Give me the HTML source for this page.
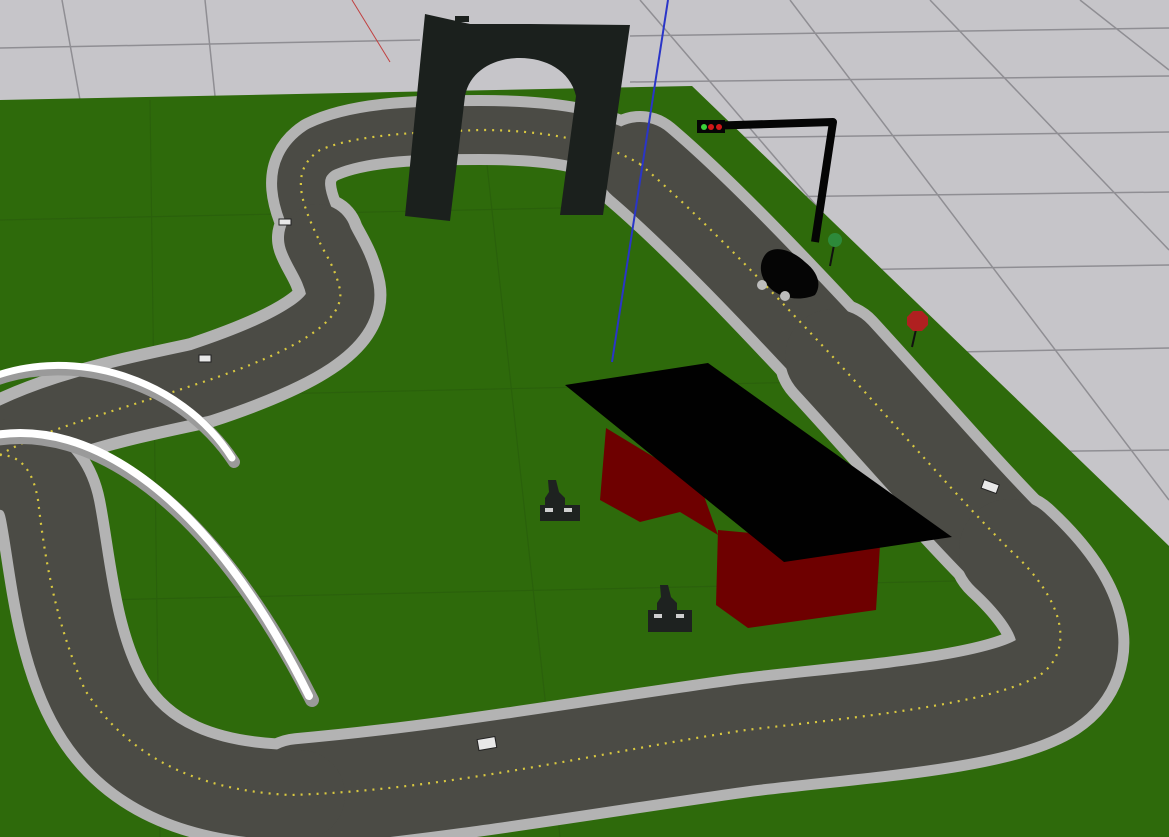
<!DOCTYPE html>
<html><head><meta charset="utf-8"><style>
html,body{margin:0;padding:0;background:#c6c5c9;overflow:hidden}
svg{display:block}
</style></head><body>
<svg width="1169" height="837" viewBox="0 0 1169 837" xmlns="http://www.w3.org/2000/svg">
<rect width="1169" height="837" fill="#c6c5c9"/>
<g stroke="#8f8e93" stroke-width="1.5" fill="none">
<line x1="0" y1="48" x2="420" y2="40"/>
<line x1="630" y1="36" x2="1169" y2="28"/>
<line x1="630" y1="82" x2="1169" y2="76"/>
<line x1="700" y1="138" x2="1169" y2="132"/>
<line x1="760" y1="197" x2="1169" y2="192"/>
<line x1="830" y1="270" x2="1169" y2="265"/>
<line x1="900" y1="353" x2="1169" y2="348"/>
<line x1="1000" y1="452" x2="1169" y2="450"/>
<line x1="62" y1="0" x2="80" y2="100"/>
<line x1="205" y1="0" x2="215" y2="96"/>
<line x1="640" y1="0" x2="1000" y2="420"/>
<line x1="790" y1="0" x2="1169" y2="500"/>
<line x1="930" y1="0" x2="1169" y2="250"/>
<line x1="1080" y1="0" x2="1169" y2="70"/>
</g>
<line x1="352" y1="0" x2="390" y2="62" stroke="#c04040" stroke-width="1"/>
<polygon points="0,100 692,86 1169,546 1169,837 0,837" fill="#2e6a0b"/>
<g stroke="#2a5f0c" stroke-width="1.2" fill="none" opacity="0.8">
<line x1="0" y1="220" x2="700" y2="205"/>
<line x1="0" y1="400" x2="900" y2="380"/>
<line x1="100" y1="600" x2="1000" y2="580"/>
<line x1="150" y1="100" x2="160" y2="837"/>
<line x1="480" y1="100" x2="560" y2="837"/>
</g>
<g fill="none" stroke="#b3b3b3" stroke-linecap="round" stroke-linejoin="round">
<path stroke-width="70" d="M320,240 C300,200 290,170 320,150 C360,130 430,130 480,130 C540,130 600,135 640,164"/>
<path stroke-width="92" d="M-40,470 C20,420 120,400 200,383 C300,350 345,320 340,290 C335,265 322,250 318,238"/>
<path stroke-width="106" d="M640,164 C700,215 780,300 833,357"/>
<path stroke-width="118" d="M833,357 C900,430 960,500 1010,550"/>
<path stroke-width="124" d="M1010,550 C1070,605 1085,655 1045,682 C995,714 850,722 746,735 C600,755 450,782 300,795"/>
<path stroke-width="112" d="M300,795 C200,795 135,765 100,705 C65,645 60,560 50,510 C42,470 10,455 -40,470"/>
</g>
<g fill="none" stroke="#4b4b45" stroke-linecap="round" stroke-linejoin="round">
<path stroke-width="48" d="M320,240 C300,200 290,170 320,150 C360,130 430,130 480,130 C540,130 600,135 640,164"/>
<path stroke-width="68" d="M-40,470 C20,420 120,400 200,383 C300,350 345,320 340,290 C335,265 322,250 318,238"/>
<path stroke-width="84" d="M640,164 C700,215 780,300 833,357"/>
<path stroke-width="96" d="M833,357 C900,430 960,500 1010,550"/>
<path stroke-width="102" d="M1010,550 C1070,605 1085,655 1045,682 C995,714 850,722 746,735 C600,755 450,782 300,795"/>
<path stroke-width="90" d="M300,795 C200,795 135,765 100,705 C65,645 60,560 50,510 C42,470 10,455 -40,470"/>
</g>
<g fill="none" stroke="#d8c840" stroke-width="2.2" stroke-dasharray="2 6">
<path d="M318,238 C300,200 290,170 320,150 C360,133 430,132 480,130 C540,130 600,140 640,164"/>
<path d="M0,455 C40,430 120,410 200,383 C300,350 345,320 340,290 C335,265 322,250 318,238"/>
<path d="M640,164 C700,215 780,300 833,357 C900,430 960,500 1010,550 C1065,600 1075,650 1040,675 C990,705 850,718 746,730 C600,752 450,790 290,795 C190,790 125,752 85,690 C55,620 45,560 38,500 C33,470 20,455 0,455"/>
</g>
<g fill="#e8e8e8" stroke="#222" stroke-width="1">
<rect x="279" y="219" width="12" height="6"/>
<rect x="199" y="355" width="12" height="7"/>
<rect x="478" y="738" width="18" height="11" transform="rotate(-10 487 744)"/>
<rect x="982" y="482" width="16" height="9" transform="rotate(20 990 487)"/>
</g>
<path d="M425,14 L470,24 L530,24 L630,25 L625,60 L603,215 L560,215 L576,96 C570,70 545,58 520,58 C495,58 470,70 465,96 L450,221 L405,216 Z" fill="#1b201d"/>
<rect x="455" y="16" width="14" height="6" fill="#1b201d"/>
<line x1="668" y1="0" x2="612" y2="362" stroke="#2a35c8" stroke-width="2"/>
<path d="M705,126 L833,122 L815,242" fill="none" stroke="#050505" stroke-width="8" stroke-linejoin="round"/>
<rect x="697" y="120" width="28" height="13" fill="#050505"/>
<circle cx="704" cy="127" r="3" fill="#3ad13a"/>
<circle cx="711" cy="127" r="3" fill="#d01818"/>
<circle cx="719" cy="127" r="3" fill="#d01818"/>
<line x1="834" y1="245" x2="830" y2="266" stroke="#111" stroke-width="2"/>
<circle cx="835" cy="240" r="7" fill="#2d8a3a"/>
<line x1="917" y1="325" x2="912" y2="347" stroke="#111" stroke-width="2"/>
<polygon points="913,311 922,311 928,317 928,325 922,331 913,331 907,325 907,317" fill="#b02020"/>
<path d="M765,255 C772,245 790,248 805,262 C818,272 822,285 815,295 C800,302 780,298 770,288 C760,278 758,265 765,255 Z" fill="#050505"/>
<circle cx="762" cy="285" r="5" fill="#bdbdbd"/>
<circle cx="785" cy="296" r="5" fill="#bdbdbd"/>
<polygon points="606,428 700,485 718,535 680,512 640,522 600,500" fill="#6e0000"/>
<polygon points="718,530 880,545 876,610 748,628 716,605" fill="#6e0000"/>
<polygon points="565,385 708,363 952,537 784,562" fill="#010101"/>
<g fill="#1e2220">
<path d="M548,480 l8,0 l3,12 l6,6 l0,8 l-20,0 l0,-8 l4,-6 z"/>
<rect x="540" y="505" width="40" height="16"/>
<path d="M660,585 l8,0 l3,12 l6,6 l0,8 l-20,0 l0,-8 l4,-6 z"/>
<rect x="648" y="610" width="44" height="22"/>
</g>
<g fill="#cfcfcf"><rect x="545" y="508" width="8" height="4"/><rect x="564" y="508" width="8" height="4"/><rect x="654" y="614" width="8" height="4"/><rect x="676" y="614" width="8" height="4"/></g>
<g fill="none" stroke-linecap="round">
<path d="M-10,382 C70,350 180,380 234,462" stroke="#9a9a9a" stroke-width="12"/>
<path d="M-10,378 C70,346 180,376 232,458" stroke="#ffffff" stroke-width="7"/>
<path d="M-10,440 C90,420 210,500 312,700" stroke="#9a9a9a" stroke-width="14"/>
<path d="M-10,436 C90,416 210,496 309,696" stroke="#ffffff" stroke-width="8"/>
</g>
</svg>
</body></html>
